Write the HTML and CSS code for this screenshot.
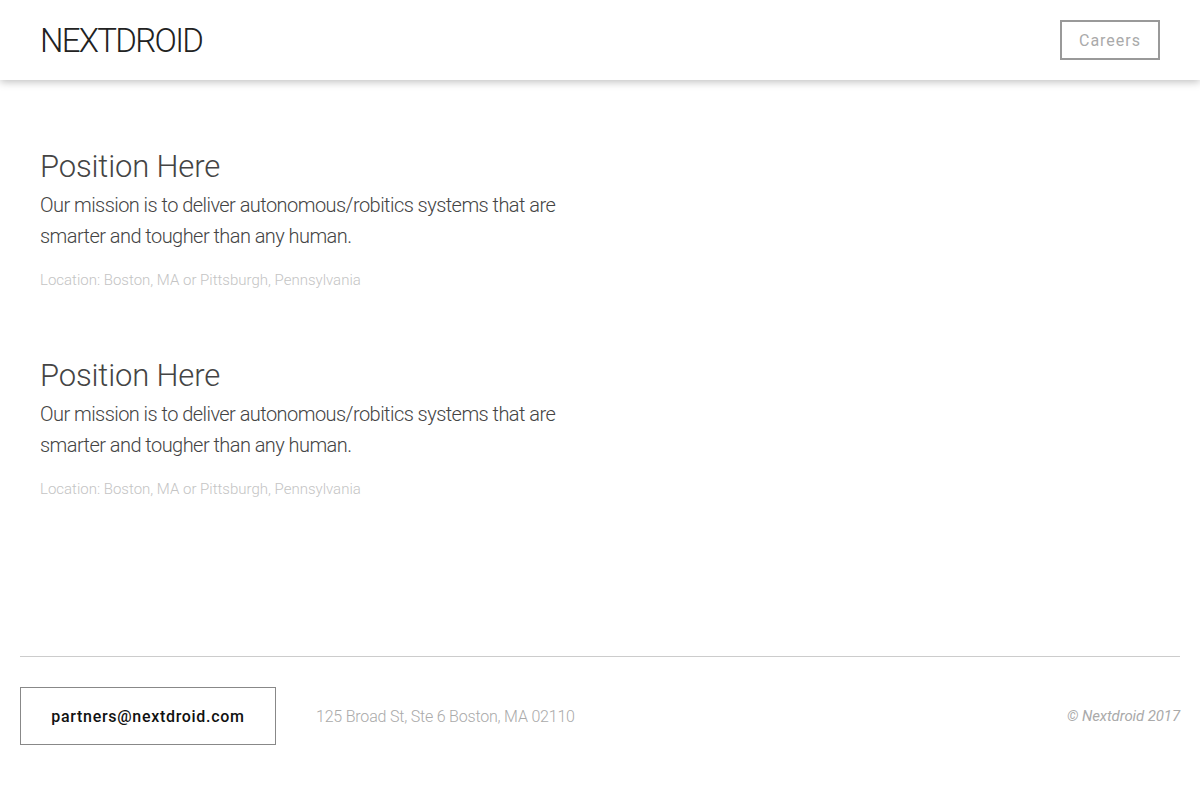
FILE: index.html
```html
<!DOCTYPE html>
<html lang="en">
<head>
<meta charset="utf-8">
<title>Nextdroid Careers</title>
<link rel="stylesheet" href="styles.css">
</head>
<body>
<header class="topbar">
  <div class="logo">NEXTDROID</div>
  <a class="nav-btn" href="#">Careers</a>
</header>
<main class="positions">
  <section class="position">
    <h2 class="position-title">Position Here</h2>
    <p class="position-desc">Our mission is to deliver autonomous/robitics systems that are smarter and tougher than any human.</p>
    <p class="position-loc">Location: Boston, MA or Pittsburgh, Pennsylvania</p>
  </section>
  <section class="position">
    <h2 class="position-title">Position Here</h2>
    <p class="position-desc">Our mission is to deliver autonomous/robitics systems that are smarter and tougher than any human.</p>
    <p class="position-loc">Location: Boston, MA or Pittsburgh, Pennsylvania</p>
  </section>
</main>
<footer class="footer">
  <div class="footer-row">
    <a class="email-btn" href="#">partners@nextdroid.com</a>
    <span class="address">125 Broad St, Ste 6 Boston, MA 02110</span>
    <span class="copy">© Nextdroid 2017</span>
  </div>
</footer>
</body>
</html>
```
FILE: styles.css
```css
* { box-sizing: border-box; }
html, body { margin: 0; padding: 0; background: #fff; }
body {
  font-family: Roboto, "Open Sans", sans-serif;
  font-weight: 300;
  color: #444;
  width: 1200px;
  height: 800px;
  overflow: hidden;
}
.topbar {
  height: 80px;
  display: flex;
  align-items: center;
  justify-content: space-between;
  padding: 0 40px;
  box-shadow: 0 2px 8px rgba(0,0,0,0.25);
  position: relative;
  z-index: 1;
}
.logo {
  font-family: Roboto, sans-serif;
  font-weight: 300;
  font-size: 33px;
  color: #222;
  letter-spacing: -1.7px;
}
.nav-btn {
  display: flex;
  align-items: center;
  justify-content: center;
  width: 100px;
  height: 40px;
  border: 2px solid #999;
  color: #aaa;
  font-size: 16px;
  font-weight: 400;
  letter-spacing: 1px;
  text-decoration: none;
}
.positions {
  padding: 68px 40px 0;
  height: 576px;
}
.position {
  width: 540px;
  margin-bottom: 67px;
}
.position-title {
  margin: 0 0 4px;
  font-size: 31px;
  font-weight: 300;
  color: #444;
  line-height: 38px;
  letter-spacing: -0.15px;
}
.position-desc {
  margin: 0;
  font-size: 20px;
  line-height: 31px;
  color: #444;
  letter-spacing: -0.55px;
}
.position-loc {
  margin: 18px 0 0;
  font-size: 15px;
  line-height: 20px;
  color: #c4c4c4;
  letter-spacing: 0;
}
.footer {
  padding: 0 20px;
}
.footer-row {
  border-top: 1px solid #ccc;
  padding-top: 30px;
  display: flex;
  align-items: center;
}
.email-btn {
  display: flex;
  align-items: center;
  justify-content: center;
  width: 256px;
  height: 58px;
  border: 1px solid #888;
  color: #111;
  font-weight: 500;
  font-size: 16px;
  letter-spacing: 0.7px;
  text-decoration: none;
}
.address {
  margin-left: 40px;
  font-size: 16px;
  color: #aaa;
  letter-spacing: -0.2px;
}
.copy {
  margin-left: auto;
  font-size: 15px;
  font-weight: 400;
  font-style: italic;
  color: #aaa;
  letter-spacing: -0.1px;
}
```
